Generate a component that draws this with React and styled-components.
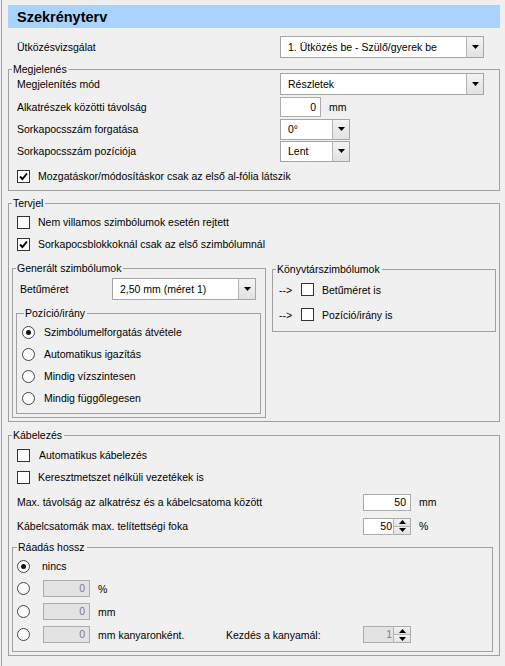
import React from "react";
import styled, { createGlobalStyle } from "styled-components";

const GlobalStyle = createGlobalStyle`
  html, body {
    margin: 0;
    padding: 0;
    background: #f0f0f0;
  }
  body {
    font-family: "Liberation Sans", Arial, sans-serif;
    font-size: 10.5px;
    color: #000;
  }
`;

const Page = styled.div`
  margin-left: 1px;
  border-left: 1px solid #a0a0a0;
  min-height: 666px;
  box-sizing: border-box;
  padding: 5px 5px 0 6px;
`;

const Header = styled.div`
  height: 23px;
  background: #a9d3ff;
  padding-left: 9px;
  font-weight: bold;
  font-size: 14.5px;
  line-height: 24px;
`;

const Group = styled.div`
  position: relative;
  border: 1px solid #a0a0a0;
  margin: ${(p) => p.$m || "0"};
  padding: ${(p) => p.$p || "0"};
  flex: ${(p) => (p.$grow ? 1 : "none")};
  width: ${(p) => (p.$w ? `${p.$w}px` : "auto")};
  align-self: flex-start;
`;

const Caption = styled.span`
  position: absolute;
  top: -7px;
  left: ${(p) => p.$left || 3}px;
  padding: 0 2px 0 1px;
  background: #f0f0f0;
  line-height: 13px;
`;

const Row = styled.div`
  display: flex;
  align-items: center;
  height: ${(p) => p.$h || 22}px;
  padding-left: ${(p) => p.$pl || 0}px;
  margin-top: ${(p) => p.$mt || 0}px;
`;

const Label = styled.span`
  width: ${(p) => (p.$w ? `${p.$w}px` : "auto")};
  flex: none;
  white-space: nowrap;
`;

const Unit = styled.span`
  margin-left: ${(p) => p.$ml || 8}px;
  width: ${(p) => (p.$w ? `${p.$w}px` : "auto")};
  flex: none;
  white-space: nowrap;
`;

const ComboBox = styled.div`
  display: flex;
  width: ${(p) => p.$w}px;
  height: ${(p) => p.$h || 21}px;
  box-sizing: border-box;
  border: 1px solid #a5a5a5;
  background: #fff;
`;

const ComboText = styled.div`
  flex: 1;
  padding-left: 7px;
  line-height: ${(p) => (p.$h || 21) - 2}px;
  white-space: nowrap;
  overflow: hidden;
`;

const ComboButton = styled.div`
  width: 16px;
  border-left: 1px solid #b4b4b4;
  background: linear-gradient(#f3f3f3, #e2e2e2);
  display: flex;
  align-items: center;
  justify-content: center;
`;

const TextBox = styled.div`
  width: ${(p) => p.$w}px;
  height: ${(p) => p.$h || 17}px;
  box-sizing: border-box;
  border: 1px solid #acacac;
  background: ${(p) => (p.$disabled ? "#e3e3e3" : "#fff")};
  color: ${(p) => (p.$disabled ? "#7d7d7d" : "#000")};
  text-align: right;
  padding-right: 4px;
  line-height: ${(p) => (p.$h || 17) - 2}px;
  flex: none;
`;

const SpinBox = styled.div`
  display: flex;
  width: ${(p) => p.$w}px;
  height: 17px;
  box-sizing: border-box;
  border: 1px solid #acacac;
  background: ${(p) => (p.$disabled ? "#e3e3e3" : "#fff")};
  color: ${(p) => (p.$disabled ? "#7d7d7d" : "#000")};
  flex: none;
`;

const SpinValue = styled.div`
  flex: 1;
  text-align: right;
  line-height: 15px;
  padding-right: 1px;
`;

const SpinButtons = styled.div`
  width: 16px;
  display: flex;
  flex-direction: column;
  border-left: 1px solid #b4b4b4;
  background: #e6e6e6;
`;

const SpinHalf = styled.div`
  flex: 1;
  display: flex;
  align-items: center;
  justify-content: center;
  border-top: ${(p) => (p.$bottom ? "1px solid #b4b4b4" : "none")};
  background: linear-gradient(#f3f3f3, #e2e2e2);
`;

const Check = styled.span`
  width: 13px;
  height: 13px;
  box-sizing: border-box;
  border: 1px solid #333;
  background: #fff;
  flex: none;
  display: flex;
  align-items: center;
  justify-content: center;
  margin-right: ${(p) => p.$gap || 8}px;
`;

const Radio = styled.span`
  width: 13px;
  height: 13px;
  box-sizing: border-box;
  border: 1px solid #444;
  border-radius: 50%;
  background: #fff;
  flex: none;
  display: flex;
  align-items: center;
  justify-content: center;
  margin-right: ${(p) => p.$gap || 9}px;
`;

const Dot = styled.span`
  width: 5px;
  height: 5px;
  border-radius: 50%;
  background: #111;
`;

const SubGroups = styled.div`
  display: flex;
  gap: 6px;
  margin-top: 13px;
`;

const Arrow = styled.span`
  width: 22px;
  flex: none;
`;

const Tri = ({ up }) => (
  <svg width="7" height="4" viewBox="0 0 7 4">
    <polygon points={up ? "0,4 7,4 3.5,0" : "0,0 7,0 3.5,4"} fill="#000" />
  </svg>
);

const CheckMark = () => (
  <svg width="9" height="9" viewBox="0 0 9 9">
    <polyline points="1,4.5 3.4,7 8,1.5" fill="none" stroke="#000" strokeWidth="1.9" />
  </svg>
);

const Combo = ({ w, h, children }) => (
  <ComboBox $w={w} $h={h}>
    <ComboText $h={h}>{children}</ComboText>
    <ComboButton>
      <Tri />
    </ComboButton>
  </ComboBox>
);

const Spin = ({ w, value, disabled }) => (
  <SpinBox $w={w} $disabled={disabled}>
    <SpinValue>{value}</SpinValue>
    <SpinButtons>
      <SpinHalf>
        <Tri up />
      </SpinHalf>
      <SpinHalf $bottom>
        <Tri />
      </SpinHalf>
    </SpinButtons>
  </SpinBox>
);

const CheckItem = ({ checked, children, gap, pl, h }) => (
  <Row $pl={pl} $h={h}>
    <Check $gap={gap}>{checked && <CheckMark />}</Check>
    <Label>{children}</Label>
  </Row>
);

const RadioBtn = ({ checked, gap }) => (
  <Radio $gap={gap}>{checked && <Dot />}</Radio>
);

export default function App() {
  return (
    <>
      <GlobalStyle />
      <Page>
        <Header>Szekrényterv</Header>

        <Row $h={22} $mt={8} $pl={9}>
          <Label $w={263}>Ütközésvizsgálat</Label>
          <Combo w={204} h={22}>1. Ütközés be - Szülő/gyerek be</Combo>
        </Row>

        <Group $m="11px 0 0 0" $p="2px 0 0 8px">
          <Caption>Megjelenés</Caption>
          <Row $h={24}>
            <Label $w={263}>Megjelenítés mód</Label>
            <Combo w={204} h={22}>Részletek</Combo>
          </Row>
          <Row $h={22}>
            <Label $w={263}>Alkatrészek közötti távolság</Label>
            <TextBox $w={41} $h={20}>0</TextBox>
            <Unit>mm</Unit>
          </Row>
          <Row $h={22}>
            <Label $w={263}>Sorkapocsszám forgatása</Label>
            <Combo w={70}>0°</Combo>
          </Row>
          <Row $h={22}>
            <Label $w={263}>Sorkapocsszám pozíciója</Label>
            <Combo w={70}>Lent</Combo>
          </Row>
          <CheckItem checked h={28}>
            Mozgatáskor/módosításkor csak az első al-fólia látszik
          </CheckItem>
        </Group>

        <Group $m="12px 0 0 0" $p="7px 3px 3px 3px">
          <Caption>Tervjel</Caption>
          <CheckItem pl={5}>Nem villamos szimbólumok esetén rejtett</CheckItem>
          <CheckItem checked pl={5}>
            Sorkapocsblokkoknál csak az első szimbólumnál
          </CheckItem>

          <SubGroups>
            <Group $w={252} $p="9px 0 3px 0">
              <Caption>Generált szimbólumok</Caption>
              <Row $pl={7}>
                <Label $w={92}>Betűméret</Label>
                <Combo w={144} h={22}>2,50 mm (méret 1)</Combo>
              </Row>
              <Group $m="13px 4px 0 3px" $p="7px 0 4px 5px">
                <Caption $left={7}>Pozíció/irány</Caption>
                <Row>
                  <RadioBtn checked />
                  <Label>Szimbólumelforgatás átvétele</Label>
                </Row>
                <Row>
                  <RadioBtn />
                  <Label>Automatikus igazítás</Label>
                </Row>
                <Row>
                  <RadioBtn />
                  <Label>Mindig vízszintesen</Label>
                </Row>
                <Row>
                  <RadioBtn />
                  <Label>Mindig függőlegesen</Label>
                </Row>
              </Group>
            </Group>

            <Group $grow $p="7px 0 4px 6px" $m="1px 0 0 0">
              <Caption>Könyvtárszimbólumok</Caption>
              <Row $h={25}>
                <Arrow>--&gt;</Arrow>
                <Check>{null}</Check>
                <Label>Betűméret is</Label>
              </Row>
              <Row $h={25}>
                <Arrow>--&gt;</Arrow>
                <Check>{null}</Check>
                <Label>Pozíció/irány is</Label>
              </Row>
            </Group>
          </SubGroups>
        </Group>

        <Group $m="13px 0 0 0" $p="8px 0 3px 0">
          <Caption>Kábelezés</Caption>
          <CheckItem pl={8} gap={9}>Automatikus kábelezés</CheckItem>
          <CheckItem pl={8}>Keresztmetszet nélküli vezetékek is</CheckItem>
          <Row $h={24} $pl={8} $mt={2}>
            <Label $w={346}>Max. távolság az alkatrész és a kábelcsatoma között</Label>
            <TextBox $w={48}>50</TextBox>
            <Unit>mm</Unit>
          </Row>
          <Row $h={24} $pl={8}>
            <Label $w={346}>Kábelcsatomák max. telítettségi foka</Label>
            <Spin w={48} value="50" />
            <Unit>%</Unit>
          </Row>

          <Group $m="9px 6px 0 3px" $p="7px 0 5px 4px">
            <Caption $left={4}>Ráadás hossz</Caption>
            <Row>
              <RadioBtn checked gap={12} />
              <Label>nincs</Label>
            </Row>
            <Row $h={23}>
              <RadioBtn gap={13} />
              <TextBox $w={47} $disabled>0</TextBox>
              <Unit>%</Unit>
            </Row>
            <Row $h={23}>
              <RadioBtn gap={13} />
              <TextBox $w={47} $disabled>0</TextBox>
              <Unit>mm</Unit>
            </Row>
            <Row $h={23}>
              <RadioBtn gap={13} />
              <TextBox $w={47} $disabled>0</TextBox>
              <Unit $w={128}>mm kanyaronként.</Unit>
              <Label $w={137}>Kezdés a kanyamál:</Label>
              <Spin w={48} value="1" disabled />
            </Row>
          </Group>
        </Group>
      </Page>
    </>
  );
}
